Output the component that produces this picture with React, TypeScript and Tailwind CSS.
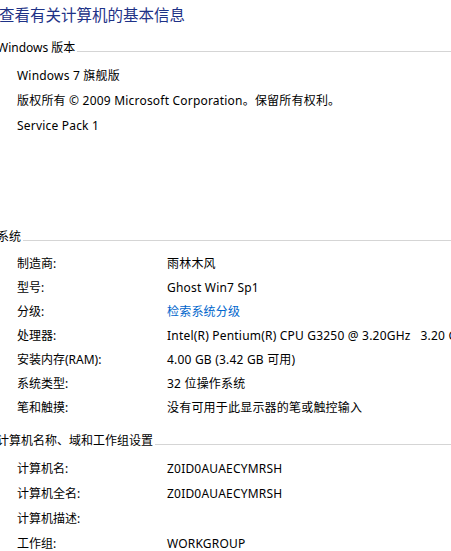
import React from "react";

const font = { fontFamily: '"Noto Sans", "Noto Sans CJK SC", sans-serif' };

function SectionHeader(props: { title: string; className?: string }) {
  return (
    <div className={"flex h-[20px] items-center -ml-[3px] " + (props.className ?? "")}>
      <span className="whitespace-nowrap text-[12px] text-black">{props.title}</span>
      <div className="ml-[2px] mt-[6px] h-px flex-1 bg-[#d5d5d5]" />
    </div>
  );
}

function Row(props: { label: string; value?: React.ReactNode; h: string }) {
  return (
    <div className={"flex items-center pl-[17px] whitespace-nowrap text-[12px] text-black " + props.h}>
      <span className="w-[150px] shrink-0">{props.label}</span>
      <span className="tracking-[0.2px]">{props.value}</span>
    </div>
  );
}

function Line(props: { children: React.ReactNode }) {
  return (
    <div className="flex h-[25px] items-center pl-[17px] whitespace-nowrap text-[12px] tracking-[0.2px] text-black">
      {props.children}
    </div>
  );
}

export default function App() {
  return (
    <div className="h-[551px] w-[451px] overflow-hidden bg-white" style={font}>
      <div className="flex h-8 items-center -ml-[1px] whitespace-nowrap text-[15.5px] text-[#1e3287]">
        查看有关计算机的基本信息
      </div>

      <SectionHeader title="Windows 版本" className="mt-[6px]" />
      <div className="mt-[5px]">
        <Line>Windows 7 旗舰版</Line>
        <Line>版权所有 © 2009 Microsoft Corporation。保留所有权利。</Line>
        <Line>Service Pack 1</Line>
      </div>

      <SectionHeader title="系统" className="mt-[89px]" />
      <div className="mt-[5px]">
        <Row h="h-[24px]" label="制造商:" value="雨林木风" />
        <Row h="h-[24px]" label="型号:" value="Ghost Win7 Sp1" />
        <Row
          h="h-[24px]"
          label="分级:"
          value={<span className="text-[#0066cc]">检索系统分级</span>}
        />
        <Row
          h="h-[24px]"
          label="处理器:"
          value={<>Intel(R) Pentium(R) CPU G3250 @ 3.20GHz&nbsp;&nbsp;&nbsp;3.20 GHz</>}
        />
        <Row h="h-[24px]" label="安装内存(RAM):" value="4.00 GB (3.42 GB 可用)" />
        <Row h="h-[24px]" label="系统类型:" value="32 位操作系统" />
        <Row h="h-[24px]" label="笔和触摸:" value="没有可用于此显示器的笔或触控输入" />
      </div>

      <SectionHeader title="计算机名称、域和工作组设置" className="mt-[11px]" />
      <div className="mt-[5px]">
        <Row h="h-[25px]" label="计算机名:" value="Z0ID0AUAECYMRSH" />
        <Row h="h-[25px]" label="计算机全名:" value="Z0ID0AUAECYMRSH" />
        <Row h="h-[25px]" label="计算机描述:" />
        <Row h="h-[25px]" label="工作组:" value="WORKGROUP" />
      </div>
    </div>
  );
}
